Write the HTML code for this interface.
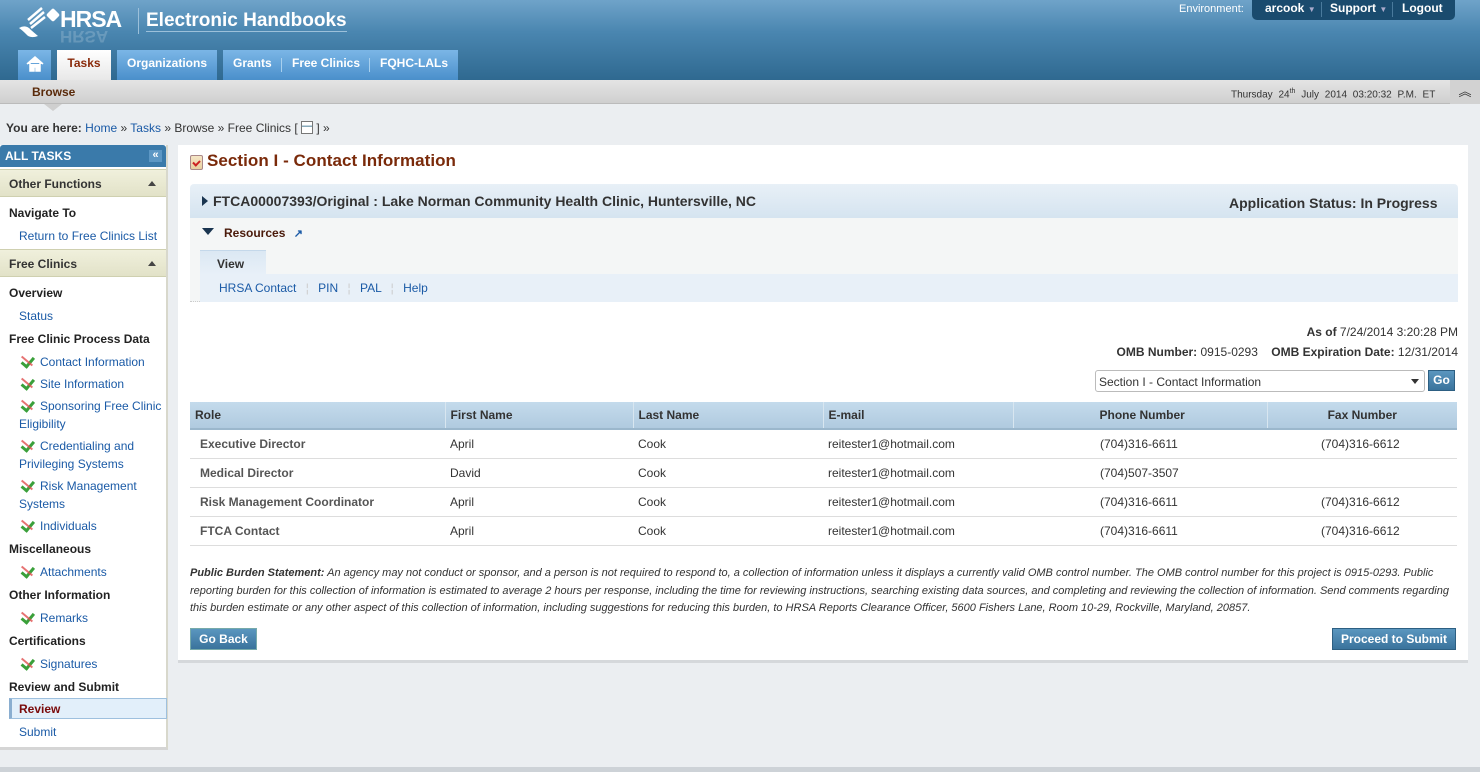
<!DOCTYPE html>
<html><head><meta charset="utf-8"><style>
*{margin:0;padding:0;box-sizing:border-box}
body{width:1480px;height:772px;overflow:hidden;background:#ebeef1;font-family:"Liberation Sans",Arial,sans-serif;font-size:12px;color:#333;position:relative}
.a{position:absolute}
a{color:#1a5aa6;text-decoration:none}
#hdr{left:0;top:0;width:1480px;height:80px;background:linear-gradient(#6fa3c9,#4a86b0 40%,#2f6990)}
.tab{top:50px;height:30px;background:linear-gradient(#7bb6e6,#4a8fcb);color:#fff;font-weight:bold;font-size:12px;line-height:26px;text-align:center}
#sub{left:0;top:80px;width:1480px;height:24px;background:linear-gradient(#e4e4e4,#cfcfcf);border-bottom:1px solid #bbb}
#side{left:0;top:145px;width:168px;height:605px;background:#fff;border-right:2px solid #d8d8cc;border-bottom:3px solid #d5d5d5}
.sh{position:absolute;left:0;width:166px;height:28px;background:linear-gradient(#f0f0dc,#e2e2c8);border-top:1px solid #cfd0b0;border-bottom:1px solid #cfd0b0;font-weight:bold;font-size:12px;color:#333;padding:7px 9px}
.sh:after{content:"";position:absolute;right:10px;top:11px;border-left:4px solid transparent;border-right:4px solid transparent;border-bottom:5px solid #444}
.sb{position:absolute;left:9px;font-weight:bold;color:#222;font-size:12px}
.sl{position:absolute;left:19px;color:#1a5aa6;font-size:12px;line-height:18px;width:148px}
.ck{display:inline-block;width:16px;height:12px;position:relative;vertical-align:-1px;margin-right:5px}
#main{left:178px;top:145px;width:1290px;height:518px;background:#fff;border-bottom:3px solid #d5d8db}
table{border-collapse:collapse;position:absolute;left:190px;top:402px;width:1267px}
th{height:27px;background:linear-gradient(#c4dbec,#b0cadf);text-align:left;font-size:12px;color:#333;padding-left:5px;border-right:1px solid #d8e6f0;border-bottom:2px solid #9bb7cc}
td{height:29px;border-bottom:1px solid #ddd;font-size:12px;color:#333;padding-left:5px}
td.r{color:#555;font-weight:bold;padding-left:10px}
.btn{background:linear-gradient(#5a96bf,#3a739c);color:#fff;font-weight:bold;border:1px solid #2d5f82;font-size:12px;text-align:center}
</style></head><body>
<div id="hdr" class="a"></div>
<svg class="a" style="left:16px;top:6px" width="30" height="34" viewBox="0 0 30 34"><path d="M26 2 L12 14 M28 6 L14 18 M29 11 L15 22" stroke="#fff" stroke-width="2.5" fill="none"/><path d="M3 22 Q10 18 15 24 L22 30 Q14 33 10 28 Q6 24 3 22Z" fill="#fff"/></svg>
<div class="a" style="left:48px;top:10px;width:10px;height:10px;background:#fff;transform:rotate(45deg);border-radius:2px"></div>
<div class="a" style="left:60px;top:6px;color:#fff;font:bold 23px 'Liberation Sans';letter-spacing:-1px">HRSA</div>
<div class="a" style="left:60px;top:26px;color:rgba(255,255,255,.18);font:bold 17px 'Liberation Sans';transform:scaleY(-1)">HRSA</div>
<div class="a" style="left:138px;top:8px;width:1px;height:26px;background:#9cc0da"></div>
<div class="a" style="left:146px;top:11px;color:#fff;font-size:19px;font-weight:bold;border-bottom:1px solid #9cc0da;line-height:20px">Electronic Handbooks</div>
<div class="a" style="left:1179px;top:3px;color:#fff;font-size:11px">Environment:</div>
<div class="a" style="left:1252px;top:0;width:203px;height:20px;background:#1a4b6e;border-radius:0 0 5px 5px;color:#fff;font-weight:bold;font-size:12px;line-height:16px">
<span class="a" style="left:13px">arcook <small style="font-size:8px;color:#aac">▼</small></span><span class="a" style="left:69px;top:2px;width:1px;height:15px;background:#4a7a9c"></span><span class="a" style="left:78px">Support <small style="font-size:8px;color:#aac">▼</small></span><span class="a" style="left:140px;top:2px;width:1px;height:15px;background:#4a7a9c"></span><span class="a" style="left:150px">Logout</span></div>
<div class="a tab" style="left:18px;width:33px"><svg width="18" height="16" viewBox="0 0 18 16" style="margin-top:6px"><path d="M1 8 L9 1 L17 8 M4 7 V15 H8 V11 H10 V15 H14 V7" fill="#fff" stroke="#fff" stroke-width="1.5"/></svg></div>
<div class="a tab" style="left:57px;width:54px;background:linear-gradient(#fff,#e8e8e8);color:#8a2a0a">Tasks</div>
<div class="a tab" style="left:117px;width:100px">Organizations</div>
<div class="a tab" style="left:223px;width:235px"><span class="a" style="left:10px">Grants</span><span class="a" style="left:58px;top:8px;width:1px;height:14px;background:#a8d0ee"></span><span class="a" style="left:69px">Free Clinics</span><span class="a" style="left:146px;top:8px;width:1px;height:14px;background:#a8d0ee"></span><span class="a" style="left:157px">FQHC-LALs</span></div>
<div id="sub" class="a"></div>
<div class="a" style="left:32px;top:85px;font-weight:bold;color:#5a2a0a;font-size:12px">Browse</div>
<div class="a" style="left:44px;top:104px;border-left:9px solid transparent;border-right:9px solid transparent;border-top:7px solid #cfcfcf"></div>
<div class="a" style="left:1231px;top:88px;font-size:10px;color:#333;word-spacing:3px">Thursday 24<sup style="font-size:7px">th</sup> July 2014 03:20:32 P.M. ET</div>
<div class="a" style="left:1450px;top:80px;width:30px;height:24px;background:#d2d2d2;text-align:center;font-size:13px;line-height:24px;color:#333">︽</div>
<div class="a" style="left:6px;top:121px;font-size:12px;color:#333"><b>You are here:</b> <a>Home</a> » <a>Tasks</a> » Browse » Free Clinics [ <span style="display:inline-block;width:12px;height:13px;border:1px solid #777;background:linear-gradient(#fff 30%,#8ab 30%,#8ab 45%,#fff 45%);vertical-align:-2px"></span> ] »</div>

<div id="side" class="a">
<div class="a" style="left:0;top:0;width:166px;height:22px;background:#3a7aaa;color:#fff;font-weight:bold;font-size:12px;padding:4px 5px;border-radius:3px 3px 0 0">ALL TASKS<span class="a" style="right:4px;top:5px;width:13px;height:12px;background:#5c97c4;font-size:11px;line-height:11px;text-align:center">«</span></div>
<div class="sh" style="top:24px">Other Functions</div>
<div class="sb" style="top:61px">Navigate To</div>
<div class="sl" style="top:82px">Return to Free Clinics List</div>
<div class="sh" style="top:104px">Free Clinics</div>
<div class="sb" style="top:141px">Overview</div>
<div class="sl" style="top:162px">Status</div>
<div class="sb" style="top:187px">Free Clinic Process Data</div>
<div class="sl" style="top:208px"><i class="ck"></i>Contact Information</div>
<div class="sl" style="top:230px"><i class="ck"></i>Site Information</div>
<div class="sl" style="top:252px"><i class="ck"></i>Sponsoring Free Clinic Eligibility</div>
<div class="sl" style="top:292px"><i class="ck"></i>Credentialing and Privileging Systems</div>
<div class="sl" style="top:332px"><i class="ck"></i>Risk Management Systems</div>
<div class="sl" style="top:372px"><i class="ck"></i>Individuals</div>
<div class="sb" style="top:397px">Miscellaneous</div>
<div class="sl" style="top:418px"><i class="ck"></i>Attachments</div>
<div class="sb" style="top:443px">Other Information</div>
<div class="sl" style="top:464px"><i class="ck"></i>Remarks</div>
<div class="sb" style="top:489px">Certifications</div>
<div class="sl" style="top:510px"><i class="ck"></i>Signatures</div>
<div class="sb" style="top:535px">Review and Submit</div>
<div class="a" style="left:9px;top:553px;width:158px;height:21px;background:#e2effa;border:1px solid #9ec0de;border-left:3px solid #8aaed0;color:#7a0a0a;font-weight:bold;padding:3px 7px">Review</div>
<div class="sl" style="top:578px">Submit</div>
</div>

<div id="main" class="a"></div>
<div class="a" style="left:190px;top:155px;width:13px;height:15px;border:1px solid #a88;background:linear-gradient(#f6e6c6,#e8d0a0);border-radius:2px"><div style="margin:4px 2px;width:7px;height:5px;border-left:2px solid #c22;border-bottom:2px solid #c22;transform:rotate(-45deg)"></div></div>
<div class="a" style="left:207px;top:151px;font-size:17px;font-weight:bold;color:#7a2a0a;letter-spacing:0.05px">Section I - Contact Information</div>
<div class="a" style="left:190px;top:184px;width:1268px;height:34px;background:linear-gradient(#e8f0f7,#d5e4f0);border-radius:4px 4px 0 0"></div>
<div class="a" style="left:202px;top:196px;border-top:5px solid transparent;border-bottom:5px solid transparent;border-left:6px solid #1a3550"></div>
<div class="a" style="left:213px;top:193px;font-size:14px;font-weight:bold;color:#333">FTCA00007393/Original : Lake Norman Community Health Clinic, Huntersville, NC</div>
<div class="a" style="left:1229px;top:195px;font-size:14px;font-weight:bold;color:#333">Application Status: In Progress</div>
<div class="a" style="left:190px;top:218px;width:1268px;height:84px;background:#f4f6f6;border-bottom:1px dotted #ccc"></div>
<div class="a" style="left:202px;top:228px;border-left:6px solid transparent;border-right:6px solid transparent;border-top:7px solid #1a3550"></div>
<div class="a" style="left:224px;top:226px;font-size:12px;font-weight:bold;color:#4a1a0a">Resources <span style="color:#1a5aa6;font-size:11px;margin-left:5px">↗</span></div>
<div class="a" style="left:200px;top:250px;width:66px;height:25px;background:linear-gradient(#dbe8f3,#e8f0f8);border-top:1px solid #c4d8ea;font-weight:bold;padding:6px 17px;color:#333">View</div>
<div class="a" style="left:200px;top:274px;width:1258px;height:28px;background:#e8f0f8"></div>
<div class="a" style="left:219px;top:281px;color:#1a5aa6">HRSA Contact <span style="color:#ccc;margin:0 6px">¦</span> PIN <span style="color:#ccc;margin:0 6px">¦</span> PAL <span style="color:#ccc;margin:0 6px">¦</span> Help</div>
<div class="a" style="right:22px;top:322px;text-align:right;line-height:20px"><b>As of</b> 7/24/2014 3:20:28 PM<br><b>OMB Number:</b> 0915-0293 &nbsp;&nbsp; <b>OMB Expiration Date:</b> 12/31/2014</div>
<div class="a" style="left:1095px;top:370px;width:330px;height:22px;border:1px solid #bbb;border-radius:3px;padding:4px 3px;font-size:12px">Section I - Contact Information<span class="a" style="right:5px;top:8px;border-left:4px solid transparent;border-right:4px solid transparent;border-top:5px solid #333"></span></div>
<div class="a btn" style="left:1428px;top:370px;width:27px;height:21px;line-height:19px">Go</div>
<table><tr><th style="width:255px">Role</th><th style="width:188px">First Name</th><th style="width:190px">Last Name</th><th style="width:190px">E-mail</th><th style="width:254px;padding-left:86px">Phone Number</th><th style="text-align:center;padding:0;border-right:0">Fax Number</th></tr>
<tr><td class="r">Executive Director</td><td>April</td><td>Cook</td><td>reitester1@hotmail.com</td><td style="padding-left:87px">(704)316-6611</td><td style="padding-left:54px">(704)316-6612</td></tr>
<tr><td class="r">Medical Director</td><td>David</td><td>Cook</td><td>reitester1@hotmail.com</td><td style="padding-left:87px">(704)507-3507</td><td></td></tr>
<tr><td class="r">Risk Management Coordinator</td><td>April</td><td>Cook</td><td>reitester1@hotmail.com</td><td style="padding-left:87px">(704)316-6611</td><td style="padding-left:54px">(704)316-6612</td></tr>
<tr><td class="r">FTCA Contact</td><td>April</td><td>Cook</td><td>reitester1@hotmail.com</td><td style="padding-left:87px">(704)316-6611</td><td style="padding-left:54px">(704)316-6612</td></tr></table>
<div class="a" style="left:190px;top:565px;width:1268px;font-size:11px;font-style:italic;line-height:17.5px;color:#333"><b>Public Burden Statement:</b> An agency may not conduct or sponsor, and a person is not required to respond to, a collection of information unless it displays a currently valid OMB control number. The OMB control number for this project is 0915-0293. Public reporting burden for this collection of information is estimated to average 2 hours per response, including the time for reviewing instructions, searching existing data sources, and completing and reviewing the collection of information. Send comments regarding this burden estimate or any other aspect of this collection of information, including suggestions for reducing this burden, to HRSA Reports Clearance Officer, 5600 Fishers Lane, Room 10-29, Rockville, Maryland, 20857.</div>
<div class="a btn" style="left:190px;top:628px;width:67px;height:22px;line-height:20px;border-color:#7aa">Go Back</div>
<div class="a btn" style="left:1332px;top:628px;width:124px;height:22px;line-height:20px">Proceed to Submit</div>
<div class="a" style="left:0;top:767px;width:1480px;height:5px;background:#cdd2d7"></div>
<style>.ck:before{content:"";position:absolute;left:2px;top:0;width:5px;height:10px;border-right:3px solid #3aa03a;border-bottom:3px solid #3aa03a;transform:rotate(40deg) translate(2px,-2px)}.ck:after{content:"";position:absolute;left:1px;top:5px;width:14px;height:2px;background:#e05050;transform:rotate(40deg);opacity:.8}</style>
</body></html>
